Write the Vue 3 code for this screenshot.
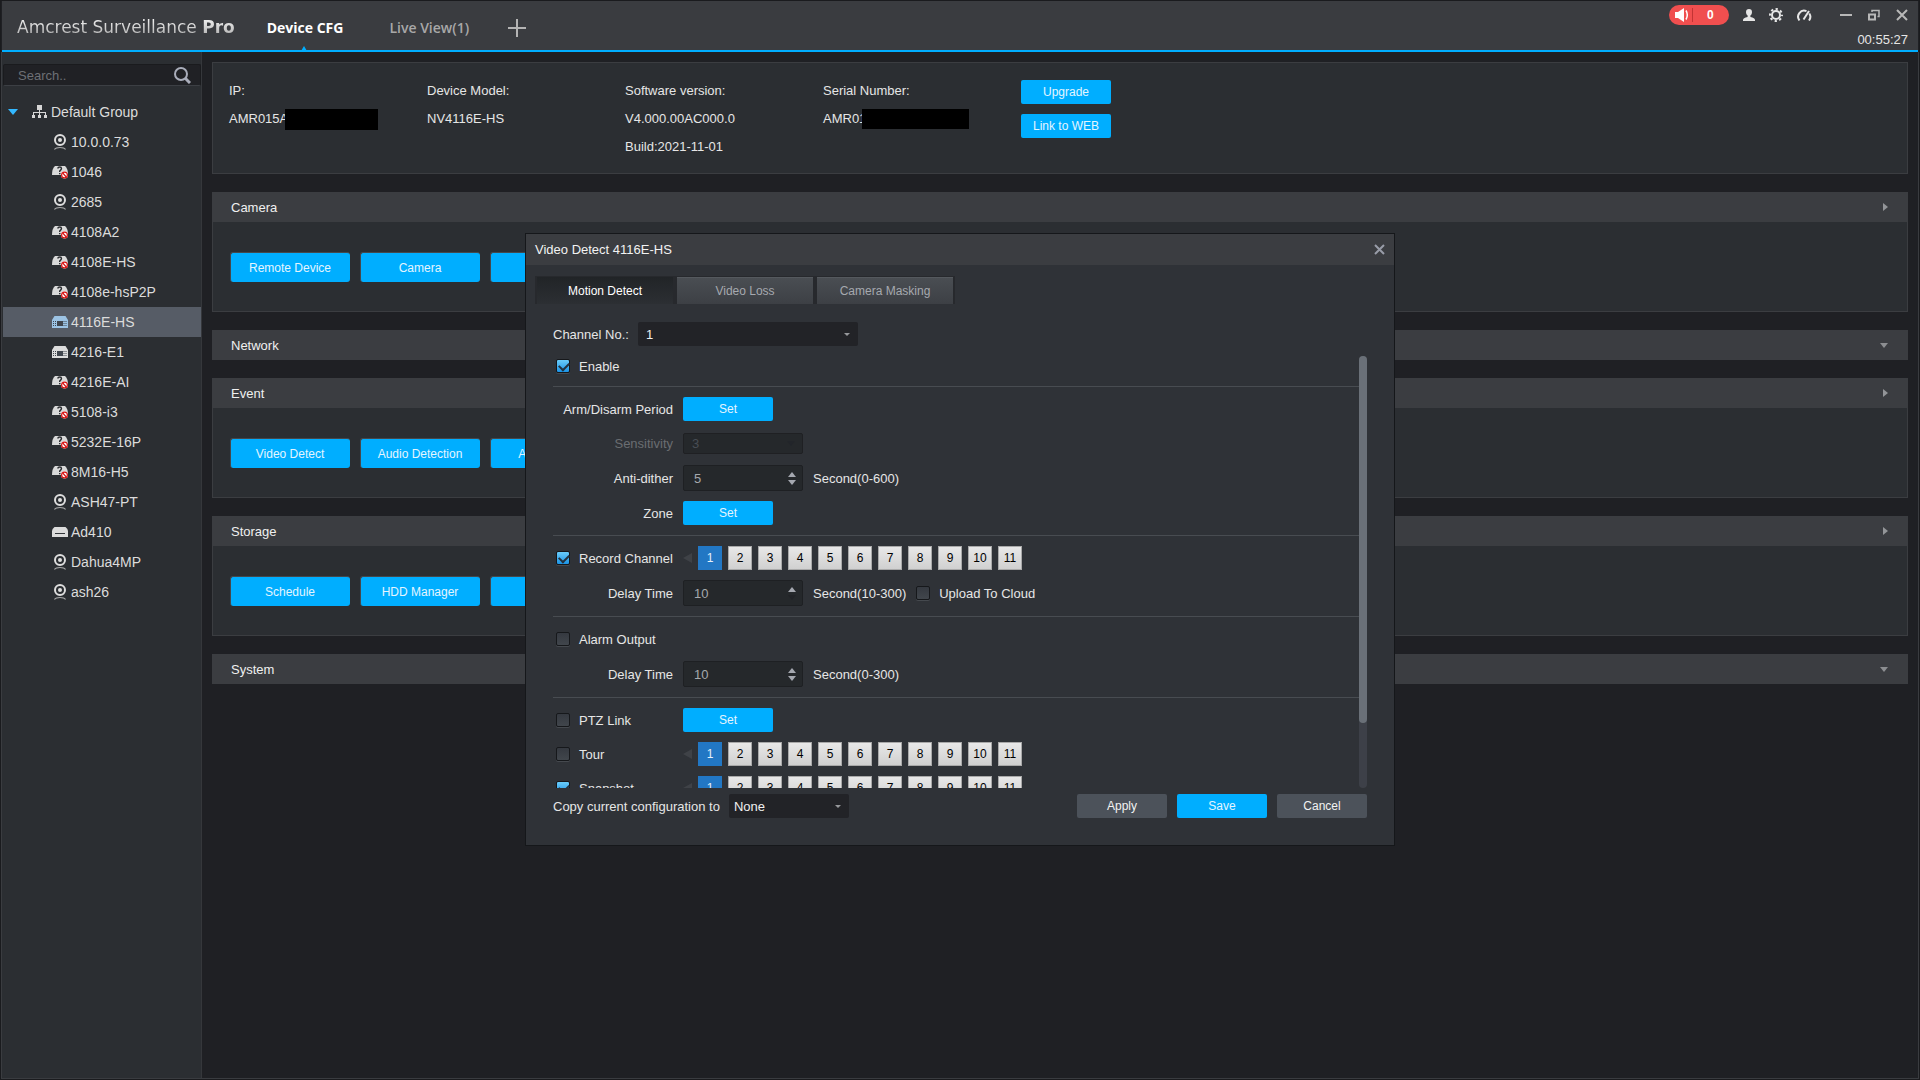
<script setup>
import { ref } from 'vue'

const devices = [
  { name: '10.0.0.73', type: 'camera' },
  { name: '1046', type: 'unknown' },
  { name: '2685', type: 'camera' },
  { name: '4108A2', type: 'unknown' },
  { name: '4108E-HS', type: 'unknown' },
  { name: '4108e-hsP2P', type: 'unknown' },
  { name: '4116E-HS', type: 'nvr' },
  { name: '4216-E1', type: 'nvr' },
  { name: '4216E-AI', type: 'unknown' },
  { name: '5108-i3', type: 'unknown' },
  { name: '5232E-16P', type: 'unknown' },
  { name: '8M16-H5', type: 'unknown' },
  { name: 'ASH47-PT', type: 'camera' },
  { name: 'Ad410', type: 'dvr' },
  { name: 'Dahua4MP', type: 'camera' },
  { name: 'ash26', type: 'camera' },
]
const selected = ref('4116E-HS')

const sections = [
  { title: 'Camera', buttons: ['Remote Device', 'Camera', 'Encode'] },
  { title: 'Network', buttons: [] },
  { title: 'Event', buttons: ['Video Detect', 'Audio Detection', 'Abnormality'] },
  { title: 'Storage', buttons: ['Schedule', 'HDD Manager', 'Record'] },
  { title: 'System', buttons: [] },
]

const tabs = ['Motion Detect', 'Video Loss', 'Camera Masking']
const activeTab = ref('Motion Detect')
const channels = 11

const enable = ref(true)
const record = ref(true)
const upload = ref(false)
const alarm = ref(false)
const ptz = ref(false)
const tour = ref(false)
const snapshot = ref(true)
const antiDither = ref('5')
const recordDelay = ref('10')
const alarmDelay = ref('10')
</script>

<template>
  <div class="app">
    <header class="topbar">
      <h1 class="brand">Amcrest Surveillance <b>Pro</b></h1>
      <nav class="nav">
        <a href="#" class="nav-tab current">Device CFG<span class="notch"></span></a>
        <a href="#" class="nav-tab">Live View(1)</a>
        <button class="icon-btn" aria-label="Add tab">
          <svg width="18" height="18" viewBox="0 0 18 18"><path d="M9 0v18M0 9h18" stroke="#b4b4b4" stroke-width="2" /></svg>
        </button>
      </nav>
      <div class="status">
        <div class="tools">
          <button class="alert">
            <svg width="18" height="14" viewBox="0 0 18 14">
              <path d="M0 4h3l6-4v14l-6-4H0z" fill="#fff" />
              <path d="M11 2.5q2.600 4.500 0 9" stroke="#fff" stroke-width="1.500" fill="none" />
              <path d="M17.500 0v14" stroke="#c23434" />
            </svg>
            <b>0</b>
          </button>
          <button class="icon-btn" aria-label="User">
            <svg width="12" height="12" viewBox="0 0 12 12" fill="#e6e6e6"><path d="M6 0a3 3.300 0 0 1 3 3.300Q9 5.500 7.400 6.500V8q4.600.8 4.600 3v1H0v-1q0-2.200 4.600-3V6.500Q3 5.500 3 3.300A3 3.300 0 0 1 6 0z" /></svg>
          </button>
          <button class="icon-btn" aria-label="Settings">
            <svg width="14" height="14" viewBox="0 0 14 14" fill="none" stroke="#e6e6e6">
              <circle cx="7" cy="7" r="4" stroke-width="2" />
              <circle cx="7" cy="7" r="6" stroke-width="2" stroke-dasharray="2.300 2.412" stroke-dashoffset="1.150" />
            </svg>
          </button>
          <button class="icon-btn" aria-label="System monitor">
            <svg width="15" height="12" viewBox="0 0 15 12" fill="none" stroke="#e6e6e6" stroke-width="2">
              <path d="M2.500 11.500a6 6 0 0 1 7-9.300M12.300 4.500a6 6 0 0 1-.3 7" />
              <path d="M6.500 10.500 12 2" stroke-width="2" />
            </svg>
          </button>
          <span class="window-btns">
            <button class="icon-btn" aria-label="Minimize">
              <svg width="12" height="12" viewBox="0 0 12 12"><path d="M0 6h12" stroke="#b8b8b8" stroke-width="2" /></svg>
            </button>
            <button class="icon-btn" aria-label="Restore">
              <svg width="12" height="12" viewBox="0 0 12 12" fill="none" stroke="#b8b8b8"><path d="M1 5.500h6v5H1z" stroke-width="2" /><path d="M4 3V1.500h7v6H9.500" stroke-width="1.500" /></svg>
            </button>
            <button class="icon-btn" aria-label="Close window">
              <svg width="12" height="12" viewBox="0 0 12 12"><path d="m1 1 10 10M11 1 1 11" stroke="#b8b8b8" stroke-width="2" /></svg>
            </button>
          </span>
        </div>
        <time class="clock">00:55:27</time>
      </div>
    </header>

    <div class="body">
      <aside class="sidebar">
        <label class="search">
          <input type="text" placeholder="Search.." aria-label="Search" />
          <svg width="17" height="17" viewBox="0 0 17 17" fill="none" stroke="#a9adba"><circle cx="7" cy="7" r="6" stroke-width="2" /><path d="m11.500 11.500 4.500 4.500" stroke-width="3" /></svg>
        </label>
        <ul class="tree">
          <li class="group">
            <span class="caret"></span>
            <svg width="15" height="14" viewBox="0 0 15 14" fill="#d6d6d6">
              <path d="M5 0h5v5H5z" /><path d="M7 5h1v5H7zM2 7h11v1H2zM1 7h1v3H1zM13 7h1v3h-1z" />
              <path d="M0 10h3v3H0zM6 10h3v3H6zM12 10h3v3h-3z" />
            </svg>
            Default Group
          </li>
          <li
            v-for="d in devices"
            :key="d.name"
            class="device"
            :class="{ selected: d.name === selected }"
            @click="selected = d.name"
          >
            <svg v-if="d.type === 'camera'" width="16" height="16" viewBox="0 0 16 16" fill="none" stroke="#dedede">
              <circle cx="8" cy="6" r="5" stroke-width="2" />
              <circle cx="8" cy="6" r="2" fill="#dedede" stroke="none" />
              <path d="M2.500 15.500q1.200-2 5.500-2t5.500 2" stroke-width="1.200" stroke="#a8a8a8" />
            </svg>
            <svg v-else-if="d.type === 'unknown'" width="16" height="14" viewBox="0 0 16 14">
              <path d="M3 1h10q3 2.500 3 9H0q0-6.500 3-9z" fill="#d9d9d9" />
              <path d="M5.700 3.500Q6 2 7.700 2q1.800 0 1.800 1.500Q9.500 4.500 7.700 6v1" stroke="#2b2e32" stroke-width="1.400" fill="none" />
              <path d="M7 8h1.500v1.300H7z" fill="#2b2e32" />
              <circle cx="12.500" cy="10" r="3.500" fill="#fff" />
              <circle cx="12.500" cy="10" r="2.900" fill="none" stroke="#d81414" stroke-width="1.200" />
              <path d="m10.700 8 3.600 4" stroke="#d81414" stroke-width="1.200" />
            </svg>
            <svg v-else-if="d.type === 'nvr'" width="16" height="12" viewBox="0 0 16 12">
              <path d="M2.500 0h11L16 4v8H0V4z" :fill="d.name === selected ? '#9cc3e4' : '#dcdcdc'" />
              <path d="M5 5h6v5H5z" fill="#40464e" />
              <path d="M1 5.500h3.500M1 7.500h3.500M1 9.500h3.500M11.500 5.500H15M11.500 7.500H15M11.500 9.500H15" stroke="#40464e" stroke-dasharray="1 1" />
            </svg>
            <svg v-else width="16" height="10" viewBox="0 0 16 10">
              <path d="M2.500 0h11Q16 2 16 4v6H0V4q0-2 2.500-4z" fill="#dcdcdc" />
              <path d="M3 6.500h10" stroke="#33363a" />
            </svg>
            {{ d.name }}
          </li>
        </ul>
      </aside>

      <main class="main">
        <section class="info">
          <dl>
            <dt>IP:</dt>
            <dd>AMR015A<span class="redact"></span></dd>
          </dl>
          <dl>
            <dt>Device Model:</dt>
            <dd>NV4116E-HS</dd>
          </dl>
          <dl>
            <dt>Software version:</dt>
            <dd>V4.000.00AC000.0</dd>
            <dd>Build:2021-11-01</dd>
          </dl>
          <dl>
            <dt>Serial Number:</dt>
            <dd>AMR01<span class="redact wide"></span></dd>
          </dl>
          <div class="info-actions">
            <button class="btn primary">Upgrade</button>
            <button class="btn primary">Link to WEB</button>
          </div>
        </section>

        <section v-for="s in sections" :key="s.title" class="panel">
          <h2 class="panel-head">
            {{ s.title }}
            <span class="tri" :class="s.buttons.length ? 'right' : 'down'"></span>
          </h2>
          <div v-if="s.buttons.length" class="panel-body">
            <button v-for="b in s.buttons" :key="b" class="tile">{{ b }}</button>
          </div>
        </section>
      </main>
    </div>

    <div class="overlay">
      <div class="dialog" role="dialog" aria-labelledby="dialog-title">
        <div class="dialog-head">
          <h2 id="dialog-title">Video Detect 4116E-HS</h2>
          <button class="icon-btn" aria-label="Close">
            <svg width="11" height="11" viewBox="0 0 11 11"><path d="m1 1 9 9M10 1l-9 9" stroke="#989ca8" stroke-width="2" /></svg>
          </button>
        </div>

        <div class="tabs" role="tablist">
          <button
            v-for="t in tabs"
            :key="t"
            role="tab"
            class="tab"
            :class="{ active: t === activeTab }"
            :aria-selected="t === activeTab"
            @click="activeTab = t"
          >{{ t }}</button>
        </div>

        <div class="content">
          <div class="channel">
            <label for="channel">Channel No.:</label>
            <span class="select large">
              <select id="channel"><option>1</option></select>
            </span>
          </div>

          <div class="scroller">
            <form class="form" @submit.prevent>
              <div class="block first">
                <label class="check"><input v-model="enable" type="checkbox" />Enable</label>
              </div>

              <div class="block">
                <div class="row">
                  <span class="name">Arm/Disarm Period</span>
                  <button type="button" class="btn primary">Set</button>
                </div>
                <div class="row">
                  <label class="name disabled" for="sensitivity">Sensitivity</label>
                  <span class="select off">
                    <select id="sensitivity" disabled><option>3</option></select>
                  </span>
                </div>
                <div class="row">
                  <label class="name" for="dither">Anti-dither</label>
                  <span class="spin">
                    <input id="dither" v-model="antiDither" type="text" />
                    <span class="steps">
                      <button type="button" class="up" aria-label="Increase"></button>
                      <button type="button" class="down" aria-label="Decrease"></button>
                    </span>
                  </span>
                  <span>Second(0-600)</span>
                </div>
                <div class="row">
                  <span class="name">Zone</span>
                  <button type="button" class="btn primary">Set</button>
                </div>
              </div>

              <div class="block">
                <div class="row">
                  <label class="check"><input v-model="record" type="checkbox" />Record Channel</label>
                  <div class="chips">
                    <span class="prev"></span>
                    <button v-for="n in channels" :key="n" type="button" class="chip" :class="{ on: n === 1 }">{{ n }}</button>
                  </div>
                </div>
                <div class="row">
                  <label class="name" for="rec-delay">Delay Time</label>
                  <span class="spin">
                    <input id="rec-delay" v-model="recordDelay" type="text" />
                    <span class="steps">
                      <button type="button" class="up" aria-label="Increase"></button>
                      <button type="button" class="down" disabled aria-label="Decrease"></button>
                    </span>
                  </span>
                  <span>Second(10-300)</span>
                  <label class="check inline"><input v-model="upload" type="checkbox" />Upload To Cloud</label>
                </div>
              </div>

              <div class="block">
                <div class="row">
                  <label class="check"><input v-model="alarm" type="checkbox" />Alarm Output</label>
                </div>
                <div class="row">
                  <label class="name" for="alarm-delay">Delay Time</label>
                  <span class="spin">
                    <input id="alarm-delay" v-model="alarmDelay" type="text" />
                    <span class="steps">
                      <button type="button" class="up" aria-label="Increase"></button>
                      <button type="button" class="down" aria-label="Decrease"></button>
                    </span>
                  </span>
                  <span>Second(0-300)</span>
                </div>
              </div>

              <div class="block">
                <div class="row">
                  <label class="check"><input v-model="ptz" type="checkbox" />PTZ Link</label>
                  <button type="button" class="btn primary">Set</button>
                </div>
                <div class="row">
                  <label class="check"><input v-model="tour" type="checkbox" />Tour</label>
                  <div class="chips">
                    <span class="prev"></span>
                    <button v-for="n in channels" :key="n" type="button" class="chip" :class="{ on: n === 1 }">{{ n }}</button>
                  </div>
                </div>
                <div class="row">
                  <label class="check"><input v-model="snapshot" type="checkbox" />Snapshot</label>
                  <div class="chips">
                    <span class="prev"></span>
                    <button v-for="n in channels" :key="n" type="button" class="chip" :class="{ on: n === 1 }">{{ n }}</button>
                  </div>
                </div>
              </div>
            </form>
            <div class="track"><div class="thumb"></div></div>
          </div>

          <div class="footer">
            <label for="copy">Copy current configuration to</label>
            <span class="select copy">
              <select id="copy"><option>None</option></select>
            </span>
            <div class="actions">
              <button class="btn">Apply</button>
              <button class="btn primary">Save</button>
              <button class="btn">Cancel</button>
            </div>
          </div>
        </div>
      </div>
    </div>
  </div>
</template>

<style>
body {
  margin: 0;
  background: #1f2024;
}
</style>

<style scoped>
* {
  box-sizing: border-box;
}
button,
input,
select {
  font-family: inherit;
  margin: 0;
}
button {
  border: 0;
  padding: 0;
  cursor: pointer;
}
.app {
  display: flex;
  flex-direction: column;
  min-height: 100vh;
  border: 1px solid #1a1b1e;
  background: #1f2024;
  color: #e6e6e6;
  font-family: "Liberation Sans", Arial, sans-serif;
  font-size: 13px;
  line-height: 17px;
}

/* Top bar */
.topbar {
  display: flex;
  height: 51px;
  padding: 0 10px 0 15px;
  border-bottom: 2px solid #00aeff;
  margin: 0 1px;
  background: #3a3c40;
}
.brand {
  margin: 14px 0 0;
  font: 17px/24px "DejaVu Sans", sans-serif;
  background: linear-gradient(#fff, #a6a6a6);
  background-clip: text;
  color: transparent;
  align-self: flex-start;
}
.nav {
  display: flex;
  align-items: center;
  margin-left: 32px;
  padding-top: 4px;
}
.nav-tab {
  position: relative;
  margin-right: 46px;
  color: #a8a8a8;
  font: 600 14px/42px "Open Sans", sans-serif;
  text-decoration: none;
}
.nav-tab:last-of-type {
  margin-right: 39px;
}
.nav-tab.current {
  color: #fff;
  font-weight: 700;
}
.notch {
  position: absolute;
  bottom: -2px;
  left: 50%;
  margin-left: -4px;
  border: 3px solid transparent;
  border-top-width: 0;
  border-bottom: 5px solid #00aeff;
}
.icon-btn {
  display: inline-flex;
  background: none;
}
.status {
  margin-left: auto;
  display: flex;
  flex-direction: column;
  align-items: flex-end;
}
.tools {
  display: flex;
  align-items: center;
  gap: 14px;
  height: 28px;
}
.alert {
  display: flex;
  align-items: center;
  gap: 14px;
  width: 60px;
  height: 20px;
  padding-left: 6px;
  border-radius: 10px;
  background: #f04f4f;
  color: #fff;
  font-size: 12px;
}
.window-btns {
  display: flex;
  gap: 16px;
  margin-left: 14px;
}
.clock {
  margin-top: 2px;
}

/* Sidebar */
.body {
  display: flex;
  flex: 1;
  border: solid #3a3c40;
  border-width: 0 1px 1px;
}
.sidebar {
  width: 200px;
  flex: none;
  padding: 12px 0 0 1px;
  border-right: 1px solid #35373b;
  background: #2b2e32;
}
.search {
  display: flex;
  align-items: center;
  height: 22px;
  padding: 0 9px 0 14px;
  border: 1px solid #1a1b1e;
  border-bottom-color: #3c3f44;
  border-radius: 2px;
  background: #202125;
}
.search input {
  flex: 1;
  min-width: 0;
  padding: 0;
  border: 0;
  outline: 0;
  background: none;
  color: #e6e6e6;
  font-size: 13px;
}
.search input::placeholder {
  color: #6d7075;
}
.tree {
  margin: 11px 0 0;
  padding: 0;
  list-style: none;
  font-size: 14px;
  line-height: 30px;
  color: #dcdcdc;
}
.group,
.device {
  display: flex;
  align-items: center;
  height: 30px;
}
.group {
  gap: 4px;
  padding-left: 5px;
}
.caret {
  margin-right: 10px;
  border: 5px solid transparent;
  border-top: 6px solid #33b8ff;
  border-bottom: 0;
}
.device {
  gap: 3px;
  padding-left: 49px;
}
.device.selected {
  background: #565c66;
}

/* Main area */
.main {
  flex: 1;
  min-width: 0;
  display: flex;
  flex-direction: column;
  gap: 18px;
  padding: 10px;
}
.info {
  display: flex;
  height: 112px;
  padding: 17px 16px;
  border: 1px solid #3b3d41;
  background: #2b2e32;
}
.info dl {
  width: 198px;
  margin: -3px 0 0;
  line-height: 28px;
}
.info dd {
  margin: 0;
  display: flex;
  align-items: center;
}
.redact {
  width: 93px;
  height: 21px;
  margin-left: -3px;
  background: #000;
}
.redact.wide {
  width: 107px;
  height: 20px;
  margin-left: -4px;
}
.info-actions {
  display: flex;
  flex-direction: column;
  gap: 10px;
}
.btn {
  width: 90px;
  height: 24px;
  flex: none;
  border-radius: 2px;
  background: #4c525a;
  color: #f2f2f2;
  font-size: 12px;
}
.btn.primary {
  background: #00aeff;
  color: #e4f5ff;
}
.panel-head {
  display: flex;
  align-items: center;
  justify-content: space-between;
  height: 30px;
  margin: 0;
  padding: 0 20px 0 19px;
  background: #3b3d41;
  font-size: 13px;
  font-weight: 400;
  color: #f0f0f0;
}
.tri {
  border: 4px solid transparent;
}
.tri.right {
  border-left: 5px solid #939598;
  border-right: 0;
}
.tri.down {
  border-top: 5px solid #8c8e91;
  border-bottom: 0;
}
.panel-body {
  display: flex;
  gap: 10px;
  height: 90px;
  padding: 30px 17px;
  border: 1px solid #3b3d41;
  border-top: 0;
  background: #2b2e32;
}
.tile {
  width: 120px;
  height: 30px;
  padding-right: 1px;
  border: solid #45484c;
  border-width: 1px 0 0 1px;
  border-radius: 3px;
  background: #00aeff;
  color: #e4f5ff;
  font-size: 12px;
}

/* Dialog */
.overlay {
  position: fixed;
  inset: 0 0 1px;
  display: flex;
  align-items: center;
  justify-content: center;
  pointer-events: none;
}
.dialog {
  width: 870px;
  border: 1px solid #15171a;
  background: #2f3237;
  pointer-events: auto;
}
.dialog-head {
  display: flex;
  align-items: center;
  justify-content: space-between;
  height: 31px;
  padding: 0 9px;
  background: #3b3d41;
}
.dialog-head h2 {
  margin: 0;
  font-size: 13px;
  line-height: 18px;
  font-weight: 400;
  color: #f2f2f2;
}
.tabs {
  display: flex;
  margin: 11px 9px 0;
}
.tab {
  width: 140px;
  height: 28px;
  border: solid #27292d;
  border-width: 1px 2px 0;
  background: linear-gradient(#4a4e53, #3d4045);
  box-shadow: inset 0 1px #55595e;
  color: #a6a9af;
  font-size: 12px;
}
.tab.active {
  background: linear-gradient(#212427, #2c2f33);
  box-shadow: none;
  color: #fff;
}
.content {
  padding: 18px 27px 27px;
}
.channel {
  display: flex;
  align-items: center;
  justify-content: flex-start;
  gap: 9px;
  margin-bottom: 10px;
}
.select {
  position: relative;
  width: 120px;
  height: 24px;
}
.select::after {
  content: "";
  position: absolute;
  right: 8px;
  top: 11px;
  border: 3px solid transparent;
  border-top-color: #97999c;
  border-bottom: 0;
  pointer-events: none;
}
.select select {
  width: 100%;
  height: 100%;
  appearance: none;
  padding: 0 8px;
  border: 0;
  border-radius: 2px;
  outline: 0;
  background: #222327;
  color: #f0f0f0;
  font-size: 13px;
}
.select.large {
  width: 220px;
}
.select.copy select {
  padding: 0 5px;
}
.select.off {
  height: 21px;
}
.select.off select {
  border: 1px solid #1f2023;
  background: #25282b;
  color: #484d54;
  opacity: 1;
}
.select.off::after {
  top: 8px;
  border-width: 5px 4px 0;
  border-top-color: #22252a;
}
.scroller {
  display: flex;
  height: 432px;
}
.form {
  flex: 1;
  overflow: hidden;
}
.track {
  width: 8px;
  border-radius: 4px;
  background: #3d4048;
}
.thumb {
  height: 85%;
  border-radius: 4px;
  background: #6a7078;
}
.block {
  display: flex;
  flex-direction: column;
  gap: 10px;
  padding: 10px 0;
  border-top: 1px solid #484c51;
}
.block.first {
  padding: 0 0 10px;
  border: 0;
}
.block.first .check {
  height: 20px;
}
.row {
  display: flex;
  align-items: center;
  gap: 10px;
  min-height: 24px;
}
.name {
  width: 120px;
  text-align: right;
}
.name.disabled {
  color: #6a6d71;
}
.check {
  display: flex;
  align-items: center;
  gap: 9px;
  width: 120px;
  padding-left: 3px;
  white-space: nowrap;
}
.check.inline {
  padding-left: 0;
}
.check input {
  appearance: none;
  position: relative;
  flex: none;
  width: 14px;
  height: 14px;
  border: 1px solid #16181b;
  border-radius: 2px;
  background: linear-gradient(#353940, #41464c);
  box-shadow: 0 1px #45494e;
}
.check input:checked {
  background: linear-gradient(#6accfa, #1b93e6);
}
.check input:checked::after {
  content: "";
  position: absolute;
  left: 2px;
  top: 2px;
  width: 8px;
  height: 5px;
  border: solid #23323f;
  border-width: 0 0 2px 2px;
  transform: rotate(-45deg);
}
.spin {
  display: flex;
  align-items: center;
  width: 120px;
  height: 26px;
  padding: 0 6px 0 10px;
  border: 1px solid #1e2023;
  border-radius: 2px;
  background: #25282b;
}
.spin input {
  flex: 1;
  min-width: 0;
  padding: 0;
  border: 0;
  outline: 0;
  background: none;
  color: #a5a8ad;
  font-size: 13px;
}
.steps {
  display: flex;
  flex-direction: column;
  gap: 3px;
}
.steps button {
  width: 0;
  height: 0;
  border: solid transparent;
  background: none;
}
.steps .up {
  border-width: 0 4px 5px;
  border-bottom-color: #a5a8b0;
}
.steps .down {
  border-width: 5px 4px 0;
  border-top-color: #a5a8b0;
}
.steps .down:disabled {
  border-top-color: #212327;
}
.chips {
  display: flex;
  align-items: center;
  gap: 6px;
}
.prev {
  width: 9px;
  border: solid transparent;
  border-width: 5px 9px 5px 0;
  border-right-color: #3f4247;
}
.chip {
  width: 24px;
  height: 24px;
  border: 1px solid #a9a9a9;
  background: linear-gradient(#e8e8e8, #d0d0d0);
  color: #000;
  font-size: 12px;
}
.chip.on {
  border-color: #2277c4;
  background: #2277c4;
  color: #e4f0fa;
}
.footer {
  display: flex;
  align-items: center;
  gap: 9px;
  margin-top: 6px;
}
.actions {
  display: flex;
  gap: 10px;
  margin-left: auto;
}
</style>
